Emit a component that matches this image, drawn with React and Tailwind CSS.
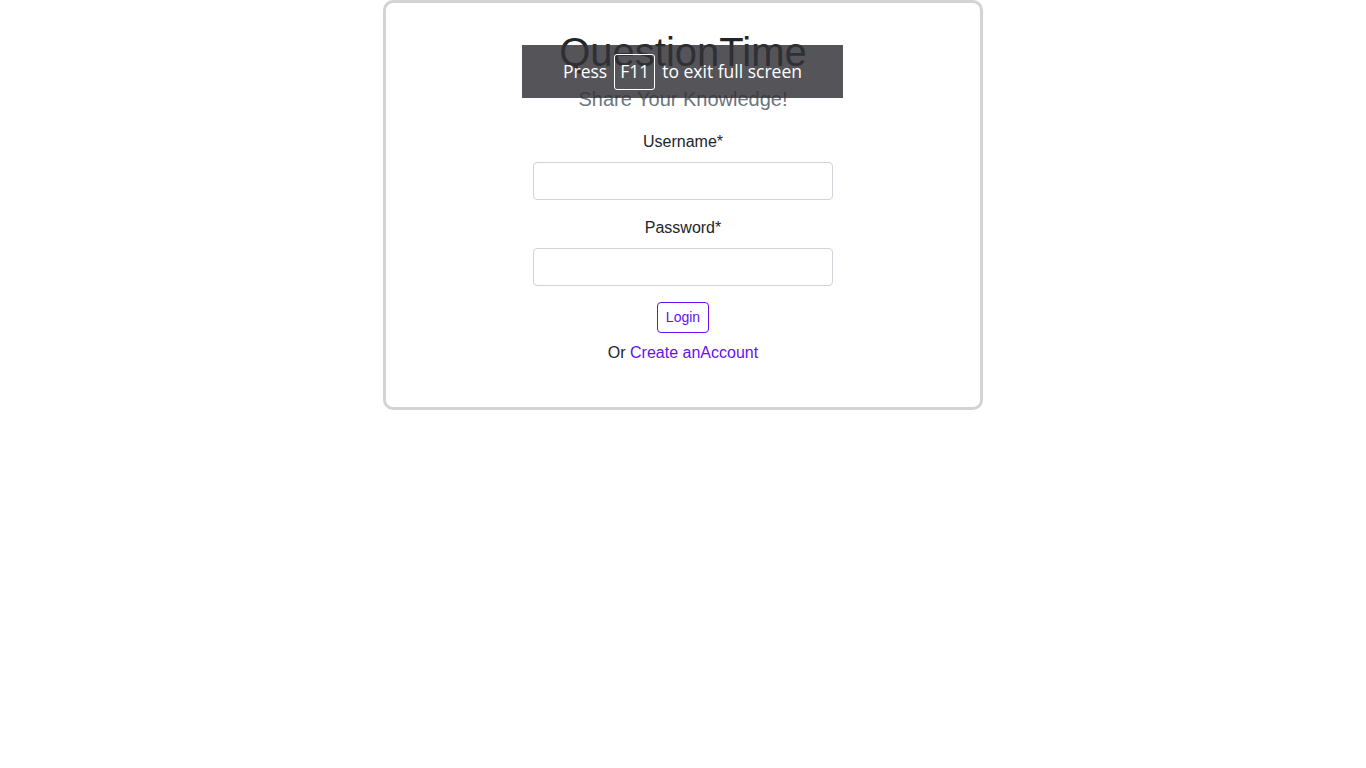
import React from 'react';

const font = { fontFamily: '"Liberation Sans", Arial, sans-serif' };

const Field = ({ label, type }) => (
    <div className="flex flex-col items-center">
        <label className="text-[16px] leading-6 text-[#212529]">{label}</label>
        <input
            type={type}
            className="mt-[8px] w-[300px] h-[38px] border border-[#ced4da] rounded-[4px] px-3 outline-none bg-white"
        />
    </div>
);

const App = () => {
    return (
        <div className="min-h-screen bg-white relative" style={font}>
            {/* --- LOGIN CARD --- */}
            <div className="w-[600px] mx-auto border-[3px] border-[#d3d3d3] rounded-[10px] pt-[25px] pb-[42px] flex flex-col items-center">
                <h1 className="text-[40px] leading-[48px] text-[#212529]">QuestionTime</h1>
                <p className="mt-[11px] text-[20px] leading-6 text-[#6c757d]">Share Your Knowledge!</p>

                <div className="mt-[19px] flex flex-col gap-[16px]">
                    <Field label="Username*" type="text" />
                    <Field label="Password*" type="password" />
                </div>

                <button className="mt-4 h-[31px] px-2 border border-[#6610f2] rounded-[4px] text-[14px] text-[#6610f2] bg-white">
                    Login
                </button>
                <p className="mt-[8px] text-[16px] leading-6 text-[#212529]">
                    Or <a href="#" className="text-[#6610f2]">Create anAccount</a>
                </p>
            </div>

            {/* --- FULLSCREEN NOTICE --- */}
            <div
                className="absolute left-[522px] top-[45px] w-[321px] h-[53px] bg-[rgba(50,50,55,0.83)] flex items-center justify-center gap-[7px] text-white text-[17.5px]"
                style={{ fontFamily: '"Open Sans", sans-serif' }}
            >
                <span>Press</span>
                <span className="border border-white rounded-[3px] h-[36px] px-[5px] flex items-center">F11</span>
                <span>to exit full screen</span>
            </div>
        </div>
    );
};

export default App;
